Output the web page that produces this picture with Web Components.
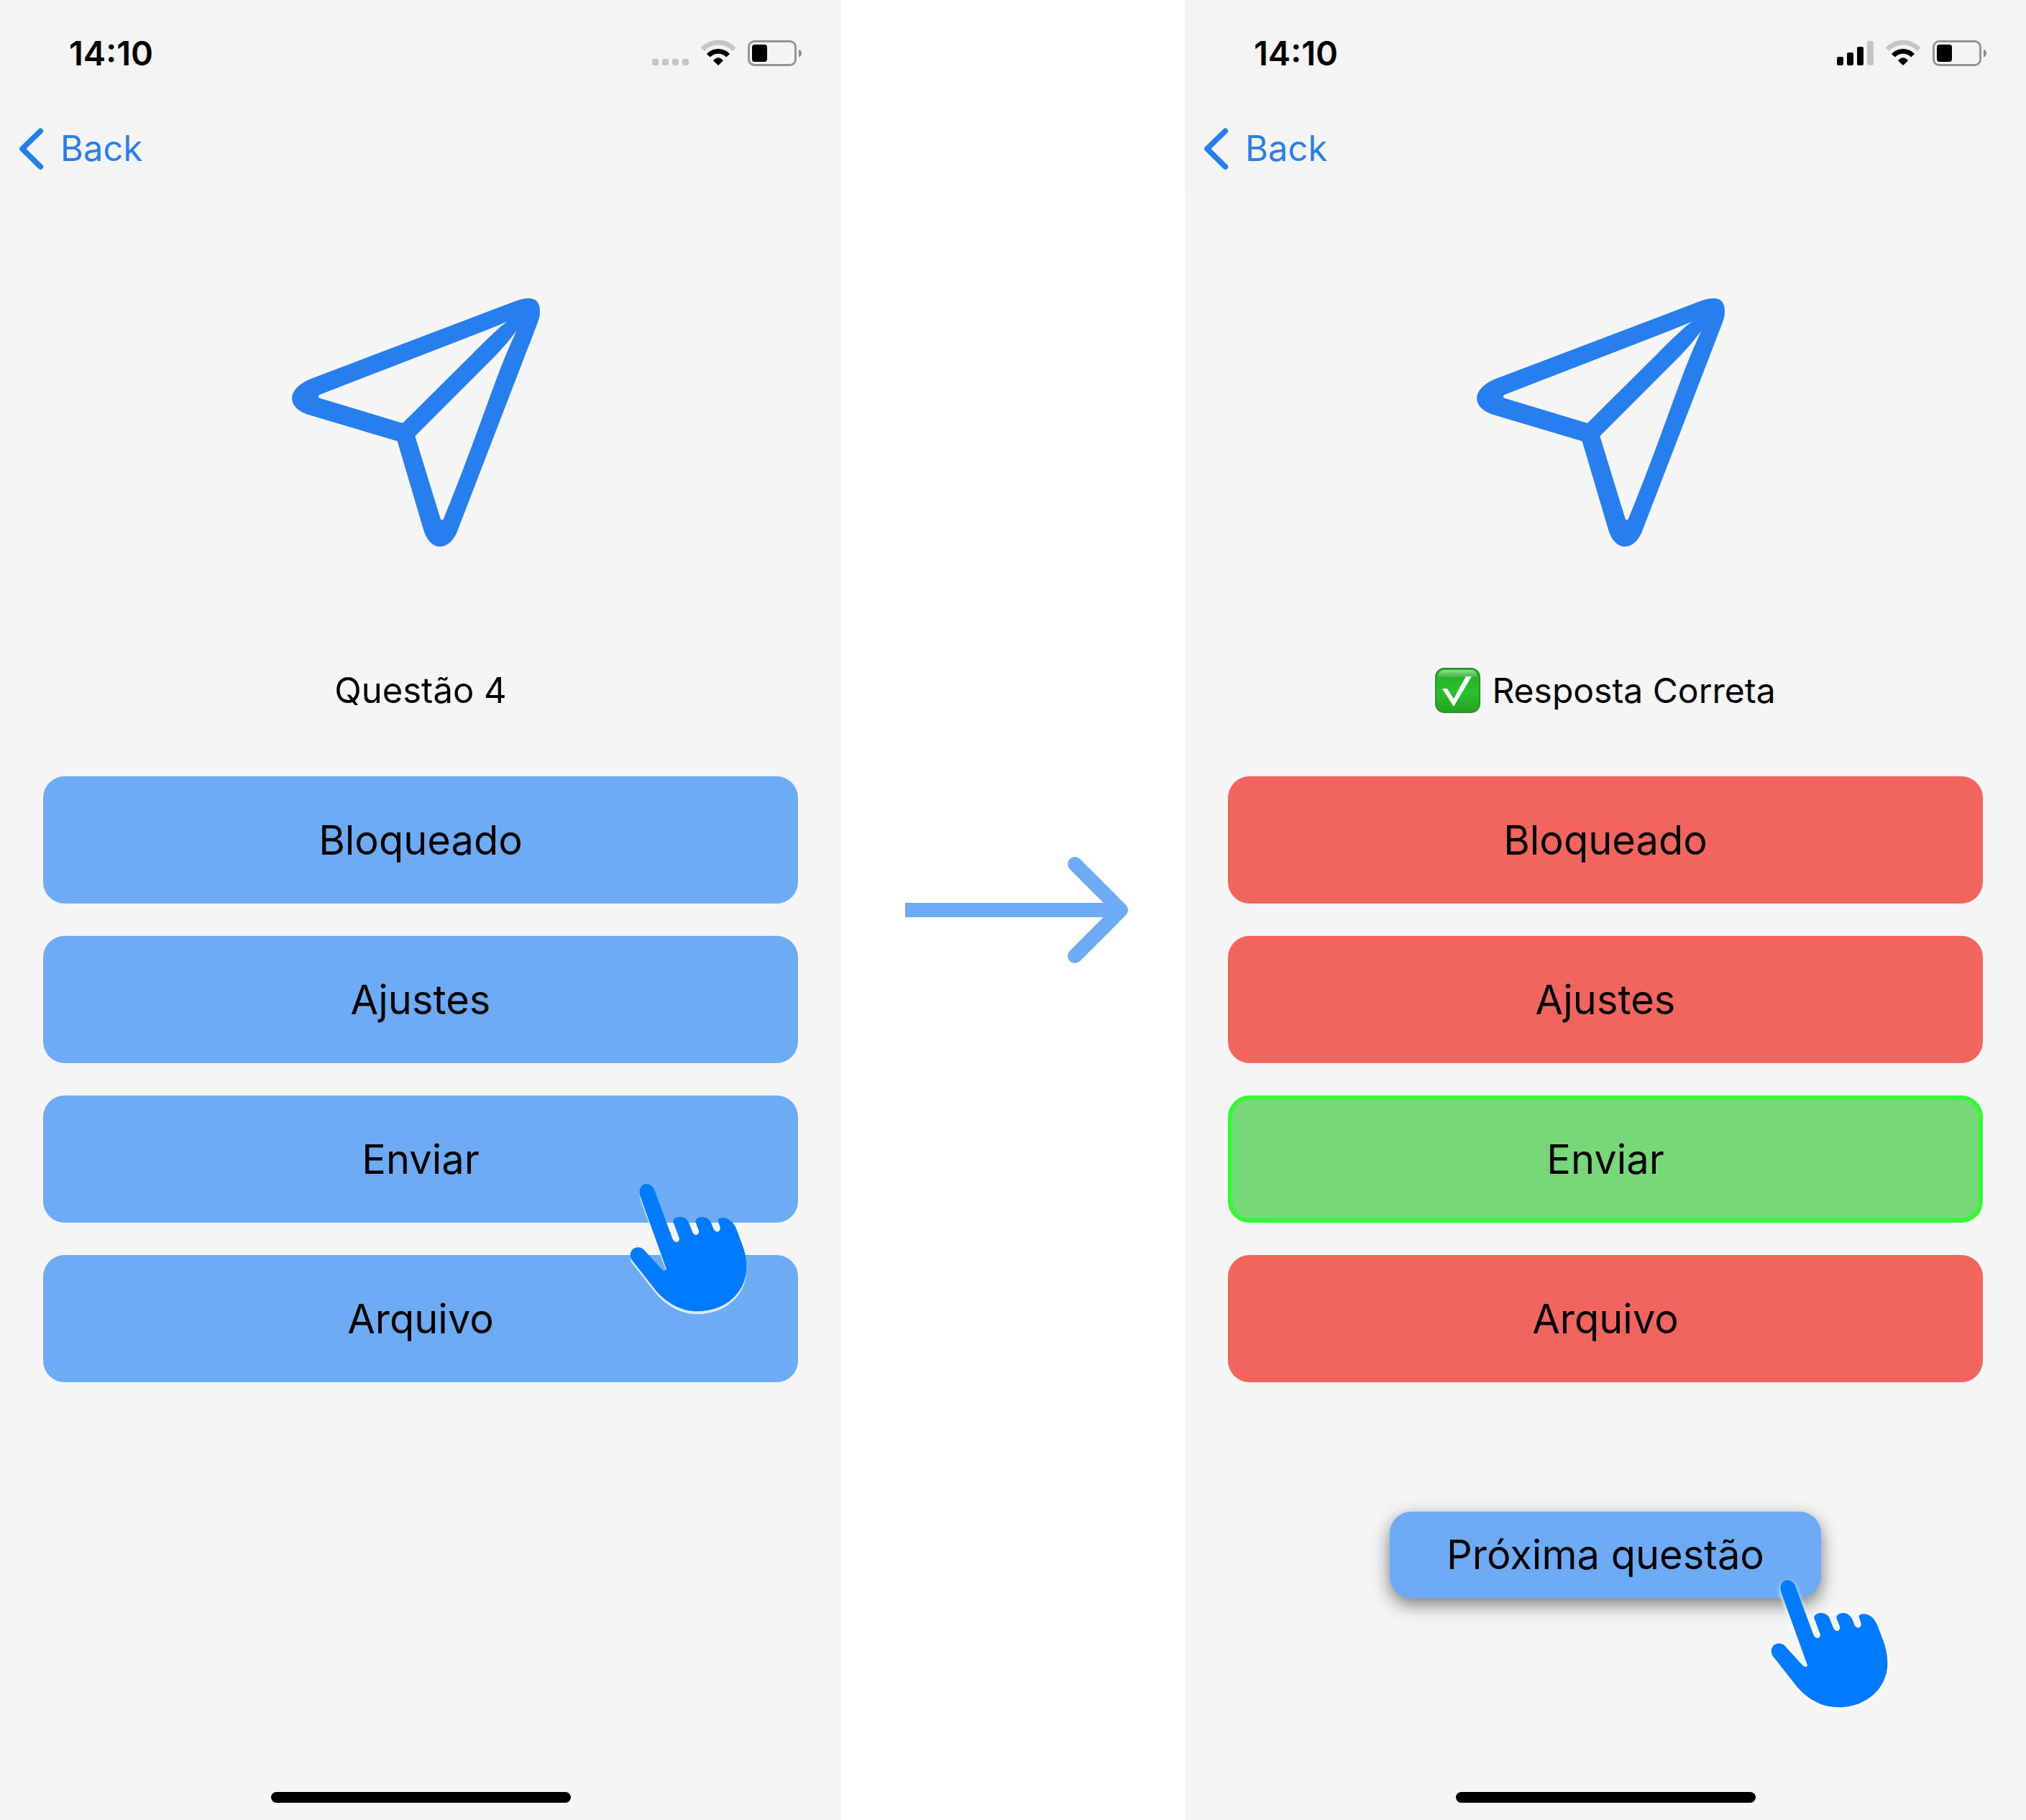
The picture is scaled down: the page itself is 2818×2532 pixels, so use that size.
<!DOCTYPE html>
<html lang="pt-BR">
<head>
<meta charset="utf-8">
<meta name="viewport" content="width=device-width, initial-scale=1">
<title>Quiz de ícones</title>
<style>
  body { margin: 0; background: #fff; font-family: Inter, "Liberation Sans", sans-serif; color: #000; }
</style>
</head>
<body>
<quiz-flow>
  <phone-screen>
    <status-bar slot="status" signal="none">14:10</status-bar>
    <nav-bar slot="nav">Back</nav-bar>
    <plane-icon></plane-icon>
    <question-title>Questão 4</question-title>
    <answer-list>
      <answer-option>Bloqueado</answer-option>
      <answer-option>Ajustes</answer-option>
      <answer-option>Enviar<hand-pointer slot="pointer"></hand-pointer></answer-option>
      <answer-option>Arquivo</answer-option>
    </answer-list>
  </phone-screen>
  <flow-arrow></flow-arrow>
  <phone-screen>
    <status-bar slot="status" signal="three">14:10</status-bar>
    <nav-bar slot="nav">Back</nav-bar>
    <plane-icon></plane-icon>
    <question-title correct>Resposta Correta</question-title>
    <answer-list>
      <answer-option state="wrong">Bloqueado</answer-option>
      <answer-option state="wrong">Ajustes</answer-option>
      <answer-option state="right">Enviar</answer-option>
      <answer-option state="wrong">Arquivo</answer-option>
    </answer-list>
    <next-button>Próxima questão<hand-pointer slot="pointer" soft></hand-pointer></next-button>
  </phone-screen>
</quiz-flow>

<script>
const define = (name, html) => {
  const template = document.createElement('template');
  template.innerHTML = html;
  customElements.define(name, class extends HTMLElement {
    constructor() {
      super();
      this.attachShadow({ mode: 'open' }).append(template.content.cloneNode(true));
    }
  });
};

define('quiz-flow', `
  <style>
    :host { display: grid; grid-template-columns: 1170fr 478fr 1170fr; min-height: 100vh; }
  </style>
  <slot></slot>`);

define('phone-screen', `
  <style>
    :host { display: flex; flex-direction: column; background: #f5f5f5; }
    header { background: #f4f4f4; }
    main { display: flex; flex-direction: column; padding: 117px 60px 0; }
    .home { width: 417px; height: 15px; border-radius: 8px; background: #000; margin: auto auto 24px; }
  </style>
  <header><slot name="status"></slot><slot name="nav"></slot></header>
  <main><slot></slot></main>
  <div class="home"></div>`);

define('status-bar', `
  <style>
    :host { display: flex; align-items: center; justify-content: space-between; height: 141px;
      box-sizing: border-box; padding: 7px 54px 0 96px; font-size: 47px; line-height: 56px; font-weight: 600; }
    svg { display: block; width: 210px; height: 40px; }
    .none, .three { display: none; }
    :host([signal="none"]) .none, :host([signal="three"]) .three { display: inline; }
  </style>
  <time><slot></slot></time>
  <svg viewBox="138 102 630 120" aria-hidden="true">
    <g class="none" fill="#c5c5c5">
      <rect x="141" y="185" width="27" height="28" rx="8"/><rect x="183" y="185" width="27" height="28" rx="8"/>
      <rect x="225" y="185" width="27" height="28" rx="8"/><rect x="267" y="185" width="27" height="28" rx="8"/>
    </g>
    <g class="three">
      <rect x="141" y="177" width="27" height="36" rx="7"/><rect x="183" y="159" width="27" height="54" rx="7"/>
      <rect x="225" y="135" width="27" height="78" rx="7"/><rect x="267" y="111" width="27" height="102" rx="7" fill="#c5c5c5"/>
    </g>
    <path d="M351 146A90 90 0 0 1 483 146" fill="none" stroke="#c5c5c5" stroke-width="20"/>
    <path d="M376 172A56 56 0 0 1 458 172" fill="none" stroke="#000" stroke-width="20"/>
    <path d="M396 193Q417 168 438 193L417 213Z"/>
    <rect x="544.500" y="112.500" width="195" height="99" rx="23" fill="none" stroke="#959595" stroke-width="9"/>
    <rect x="558" y="126" width="63" height="72" rx="11"/>
    <path d="M753 146Q765 150 765 162T753 179Z" fill="#8c8c8c"/>
  </svg>`);

define('nav-bar', `
  <style>
    :host { display: flex; align-items: center; height: 132px; padding-left: 24px; }
    a { display: flex; align-items: center; gap: 20px; color: #2a7eec; text-decoration: none; font-size: 49px; line-height: 60px; }
    svg { display: block; width: 40px; height: 60px; }
  </style>
  <a href="#"><svg viewBox="72 470 120 180" aria-hidden="true"><path d="M169 486L93 560L169 635" fill="none" stroke="#257eee" stroke-width="23" stroke-linecap="round" stroke-linejoin="round"/></svg><slot></slot></a>`);

define('plane-icon', `
  <style>
    :host { display: block; align-self: center; }
    svg { display: block; width: 410px; height: 390px; }
  </style>
  <svg viewBox="0 0 1230 1170" aria-hidden="true">
    <path fill="#277eee" fill-rule="evenodd" d="M1010 87C1080 62 1113 77 1113 130C1113 150 1108 165 1103 178L775 1030C741 1137 655 1137 627 1040L518 671L160 565C52 537 52 455 155 412Z
      M977 172C950 190 900 238 830 308L540 596L195 492Q181 486 195 477L890 208Q935 190 977 172Z
      M1016 210Q975 265 930 312L592 650L698 995Q704 1006 711 995Q785 812 848 640C925 432 950 350 1016 210Z"/>
  </svg>`);

define('question-title', `
  <style>
    :host { display: block; align-self: center; padding: 150px 0 89px; }
    h1 { display: flex; align-items: center; gap: 16px; margin: 0; font-size: 49px; line-height: 61px; font-weight: 400; }
    :host([correct]) h1 { font-size: 48px; }
    svg { display: none; width: 63px; height: 63px; margin: -1px 0; }
    :host([correct]) svg { display: block; }
  </style>
  <h1><svg viewBox="0 0 63 63" aria-hidden="true">
    <defs>
      <linearGradient id="face" x1="0" y1="0" x2="0" y2="1"><stop offset="0" stop-color="#32ab36"/><stop offset=".25" stop-color="#28b52c"/><stop offset=".55" stop-color="#28c02c"/><stop offset="1" stop-color="#27a124"/></linearGradient>
      <linearGradient id="shine" x1="0" y1="0" x2="0" y2="1"><stop offset="0" stop-color="#8bdc8b"/><stop offset="1" stop-color="#3cbb3f"/></linearGradient>
    </defs>
    <rect x="1" y="1" width="61" height="61" rx="12" fill="url(#face)" stroke="#27942a" stroke-width="2"/>
    <path d="M12 3H51Q58 4 59 12Q57 13 52 13H11Q6 13 4 12Q5 4 12 3Z" fill="url(#shine)"/>
    <path d="M10 29H17L26 43L43 12H51L26 54Z" fill="#fff"/>
  </svg><span><slot></slot></span></h1>`);

define('answer-list', `
  <style>:host { display: flex; flex-direction: column; gap: 45px; }</style>
  <slot></slot>`);

define('answer-option', `
  <style>
    :host { display: block; position: relative; }
    button { display: block; width: 100%; height: 177px; padding: 0; border: 0; border-radius: 30px;
      background: #6eabf5; color: #000; font: inherit; font-size: 56px; line-height: 72px; }
    :host([state="wrong"]) button { background: #f2655e; }
    :host([state="right"]) button { background: #77d877; border: 6px solid #35f935; }
    ::slotted([slot="pointer"]) { position: absolute; z-index: 1; right: 40px; top: 86px; }
  </style>
  <button type="button"><slot></slot></button><slot name="pointer"></slot>`);

define('next-button', `
  <style>
    :host { display: block; position: relative; align-self: center; width: 600px; margin-top: 180px; }
    button { display: block; width: 100%; height: 120px; padding: 0; border: 0; border-radius: 30px;
      background: #6eabf5; color: #000; font: inherit; font-size: 56px; line-height: 72px; box-shadow: 0 9px 24px rgba(0,0,0,.5); }
    ::slotted([slot="pointer"]) { position: absolute; z-index: 1; right: -124px; top: 58px; }
  </style>
  <button type="button"><slot></slot></button><slot name="pointer"></slot>`);

define('hand-pointer', `
  <style>
    :host { display: block; width: 220px; height: 240px; pointer-events: none; filter: drop-shadow(0 4px 0 rgba(255,255,255,.75)); }
    :host([soft]) { filter: drop-shadow(0 3px 3px #fff); }
    svg { display: block; width: 100%; height: 100%; }
  </style>
  <svg viewBox="0 0 660 720" aria-hidden="true">
    <path fill="#007bff" d="M119 145C119 103 169 101 182 140L257 342C266 361 288 355 284 337L259 270C256 246 312 236 325 275L340 313C348 331 369 326 366 306L352 270C350 247 400 235 418 275L428 300C437 318 458 312 455 293L445 262C450 247 503 243 525 305C545 362 565 395 565 460C565 560 480 643 360 643C290 643 230 605 190 560L85 427C66 390 107 359 137 386L208 464C217 475 226 477 231 467L121 162Q119 155 119 145Z"/>
  </svg>`);

define('flow-arrow', `
  <style>
    :host { display: flex; align-items: center; justify-content: center; }
    svg { display: block; width: 320px; height: 160px; }
  </style>
  <svg viewBox="1249 1186 320 160" aria-hidden="true">
    <path d="M1259 1266H1559M1495 1202L1559 1266L1495 1330" fill="none" stroke="#6eabf5" stroke-width="20" stroke-linejoin="round"/>
    <circle cx="1495" cy="1202" r="10" fill="#6eabf5"/><circle cx="1495" cy="1330" r="10" fill="#6eabf5"/>
  </svg>`);
</script>
</body>
</html>
